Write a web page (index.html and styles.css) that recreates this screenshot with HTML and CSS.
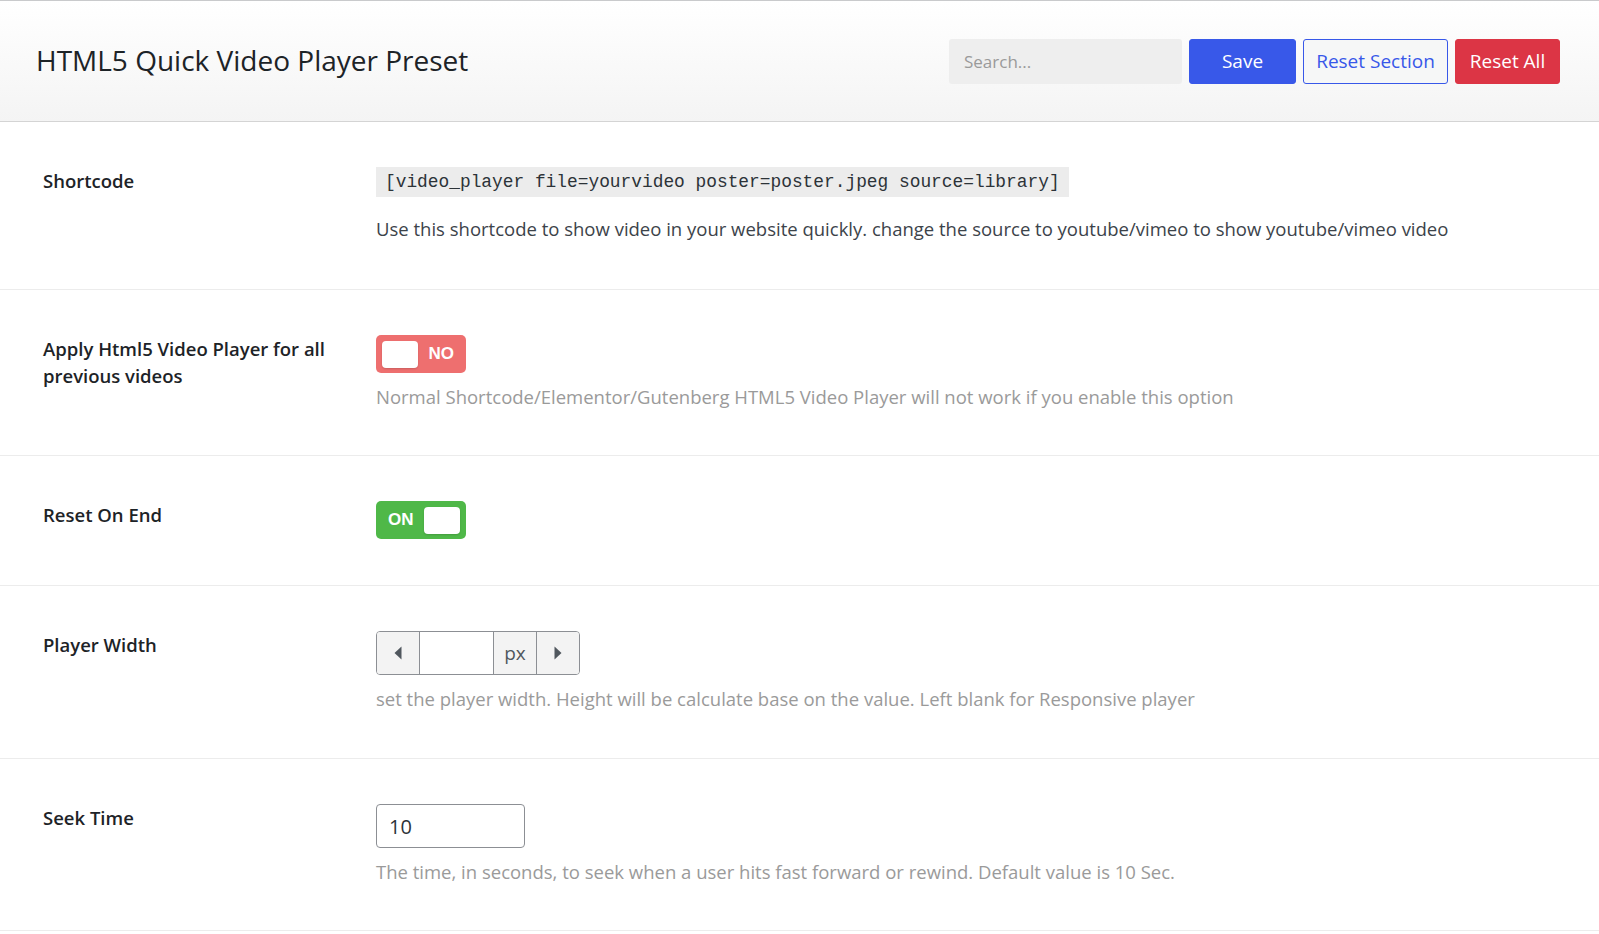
FILE: index.html
```html
<!DOCTYPE html>
<html lang="en">
<head>
<meta charset="utf-8">
<title>HTML5 Quick Video Player Preset</title>
<link rel="stylesheet" href="styles.css">
</head>
<body>
<header class="topbar">
  <h1 class="title">HTML5 Quick Video Player Preset</h1>
  <div class="actions">
    <input class="search" type="text" placeholder="Search...">
    <button class="btn btn-save">Save</button>
    <button class="btn btn-outline">Reset Section</button>
    <button class="btn btn-danger">Reset All</button>
  </div>
</header>

<main class="settings">
  <section class="row">
    <div class="label">Shortcode</div>
    <div class="field">
      <code class="code">[video_player file=yourvideo poster=poster.jpeg source=library]</code>
      <p class="desc desc-dark">Use this shortcode to show video in your website quickly. change the source to youtube/vimeo to show youtube/vimeo video</p>
    </div>
  </section>

  <section class="row">
    <div class="label">Apply Html5 Video Player for all previous videos</div>
    <div class="field">
      <div class="toggle toggle-off"><span class="knob"></span><span class="toggle-text">NO</span></div>
      <p class="desc">Normal Shortcode/Elementor/Gutenberg HTML5 Video Player will not work if you enable this option</p>
    </div>
  </section>

  <section class="row row-toggle">
    <div class="label">Reset On End</div>
    <div class="field">
      <div class="toggle toggle-on"><span class="toggle-text">ON</span><span class="knob"></span></div>
    </div>
  </section>

  <section class="row row-number">
    <div class="label">Player Width</div>
    <div class="field">
      <div class="numgroup">
        <span class="step"><svg width="10" height="16" viewBox="0 0 10 16"><path d="M8.5 1.5 L1.5 8 L8.5 14.5 Z" fill="#50575e"/></svg></span>
        <input class="numinput" type="text" value="">
        <span class="unit">px</span>
        <span class="step"><svg width="10" height="16" viewBox="0 0 10 16"><path d="M1.5 1.5 L8.5 8 L1.5 14.5 Z" fill="#50575e"/></svg></span>
      </div>
      <p class="desc">set the player width. Height will be calculate base on the value. Left blank for Responsive player</p>
    </div>
  </section>

  <section class="row">
    <div class="label">Seek Time</div>
    <div class="field">
      <input class="textinput" type="text" value="10">
      <p class="desc">The time, in seconds, to seek when a user hits fast forward or rewind. Default value is 10 Sec.</p>
    </div>
  </section>
</main>
</body>
</html>
```

FILE: styles.css
```css
* { box-sizing: border-box; }

html, body {
  margin: 0;
  padding: 0;
  background: #fff;
}

body {
  font-family: "Open Sans", "Noto Sans", sans-serif;
  color: #1d2327;
}

.topbar {
  display: flex;
  align-items: center;
  justify-content: space-between;
  height: 122px;
  padding: 0 39px 0 36px;
  border-top: 1px solid #c9cacc;
  border-bottom: 1px solid #d4d4d4;
  background: linear-gradient(to bottom, #ffffff, #f4f4f4);
}

.title {
  margin: 0 0 2px;
  font-size: 28px;
  font-weight: 400;
  color: #1d2327;
}

.actions {
  display: flex;
  align-items: center;
  gap: 7px;
}

.search {
  width: 233px;
  height: 45px;
  border: none;
  border-radius: 3px;
  background: #eeeeee;
  padding: 0 15px;
  font-family: inherit;
  font-size: 17px;
  color: #333;
  outline: none;
}

.search::placeholder { color: #9a9a9a; }

.btn {
  height: 45px;
  border-radius: 3px;
  font-family: inherit;
  font-size: 19px;
  cursor: pointer;
  padding: 0;
}

.btn-save {
  width: 107px;
  background: #3858e9;
  border: 1px solid #3858e9;
  color: #fff;
}

.btn-outline {
  width: 145px;
  background: #f6f7f7;
  border: 1px solid #3858e9;
  color: #3858e9;
}

.btn-danger {
  width: 105px;
  background: #dc3545;
  border: 1px solid #dc3545;
  color: #fff;
}

.settings { display: block; }

.row {
  display: flex;
  padding: 45px 0 45px 43px;
  border-bottom: 1px solid #ececec;
}

.row-toggle,
.row-number { padding-bottom: 46px; }

.label {
  flex: none;
  width: 333px;
  padding-right: 36px;
  font-size: 18.5px;
  font-weight: 600;
  line-height: 27px;
  color: #1d2327;
}

.field {
  flex: 1;
  min-width: 0;
}

.code {
  display: inline-block;
  height: 30px;
  line-height: 30px;
  padding: 0 9px;
  background: #ececec;
  font-family: "Liberation Mono", "DejaVu Sans Mono", monospace;
  font-size: 17.85px;
  color: #2c3338;
}

.desc {
  margin: 10px 0 0;
  font-size: 18.5px;
  line-height: 27px;
  color: #9a9a9a;
}

.desc-dark {
  margin-top: 18px;
  margin-bottom: 2px;
  color: #3c434a;
}

.toggle {
  display: flex;
  align-items: center;
  justify-content: space-between;
  width: 90px;
  height: 38px;
  border-radius: 5px;
  padding: 0 6px;
  font-family: "Liberation Sans", Arial, sans-serif;
  font-weight: 700;
  font-size: 17px;
  color: #fff;
}

.toggle-off { background: #ee6f6f; }
.toggle-on { background: #4fb848; }

.knob {
  width: 36px;
  height: 27px;
  border-radius: 4px;
  background: #fff;
  box-shadow: 0 1px 2px rgba(0,0,0,0.15);
}

.toggle-off .toggle-text { margin-right: 6px; }
.toggle-on .toggle-text { margin-left: 6px; }

.numgroup {
  display: inline-flex;
  height: 44px;
  border: 1px solid #8c8f94;
  border-radius: 4px;
  overflow: hidden;
}

.step {
  display: flex;
  align-items: center;
  justify-content: center;
  width: 42px;
  background: #f3f3f3;
}

.numinput {
  width: 75px;
  border: none;
  border-left: 1px solid #8c8f94;
  border-right: 1px solid #8c8f94;
  outline: none;
  padding: 0 8px;
  font-family: inherit;
  font-size: 18px;
}

.unit {
  display: flex;
  align-items: center;
  justify-content: center;
  width: 43px;
  background: #f3f3f3;
  border-right: 1px solid #8c8f94;
  font-size: 19px;
  color: #50575e;
}

.textinput {
  display: block;
  width: 149px;
  height: 44px;
  border: 1px solid #8c8f94;
  border-radius: 4px;
  padding: 0 12px;
  font-family: inherit;
  font-size: 20px;
  color: #2c3338;
  outline: none;
}
```
